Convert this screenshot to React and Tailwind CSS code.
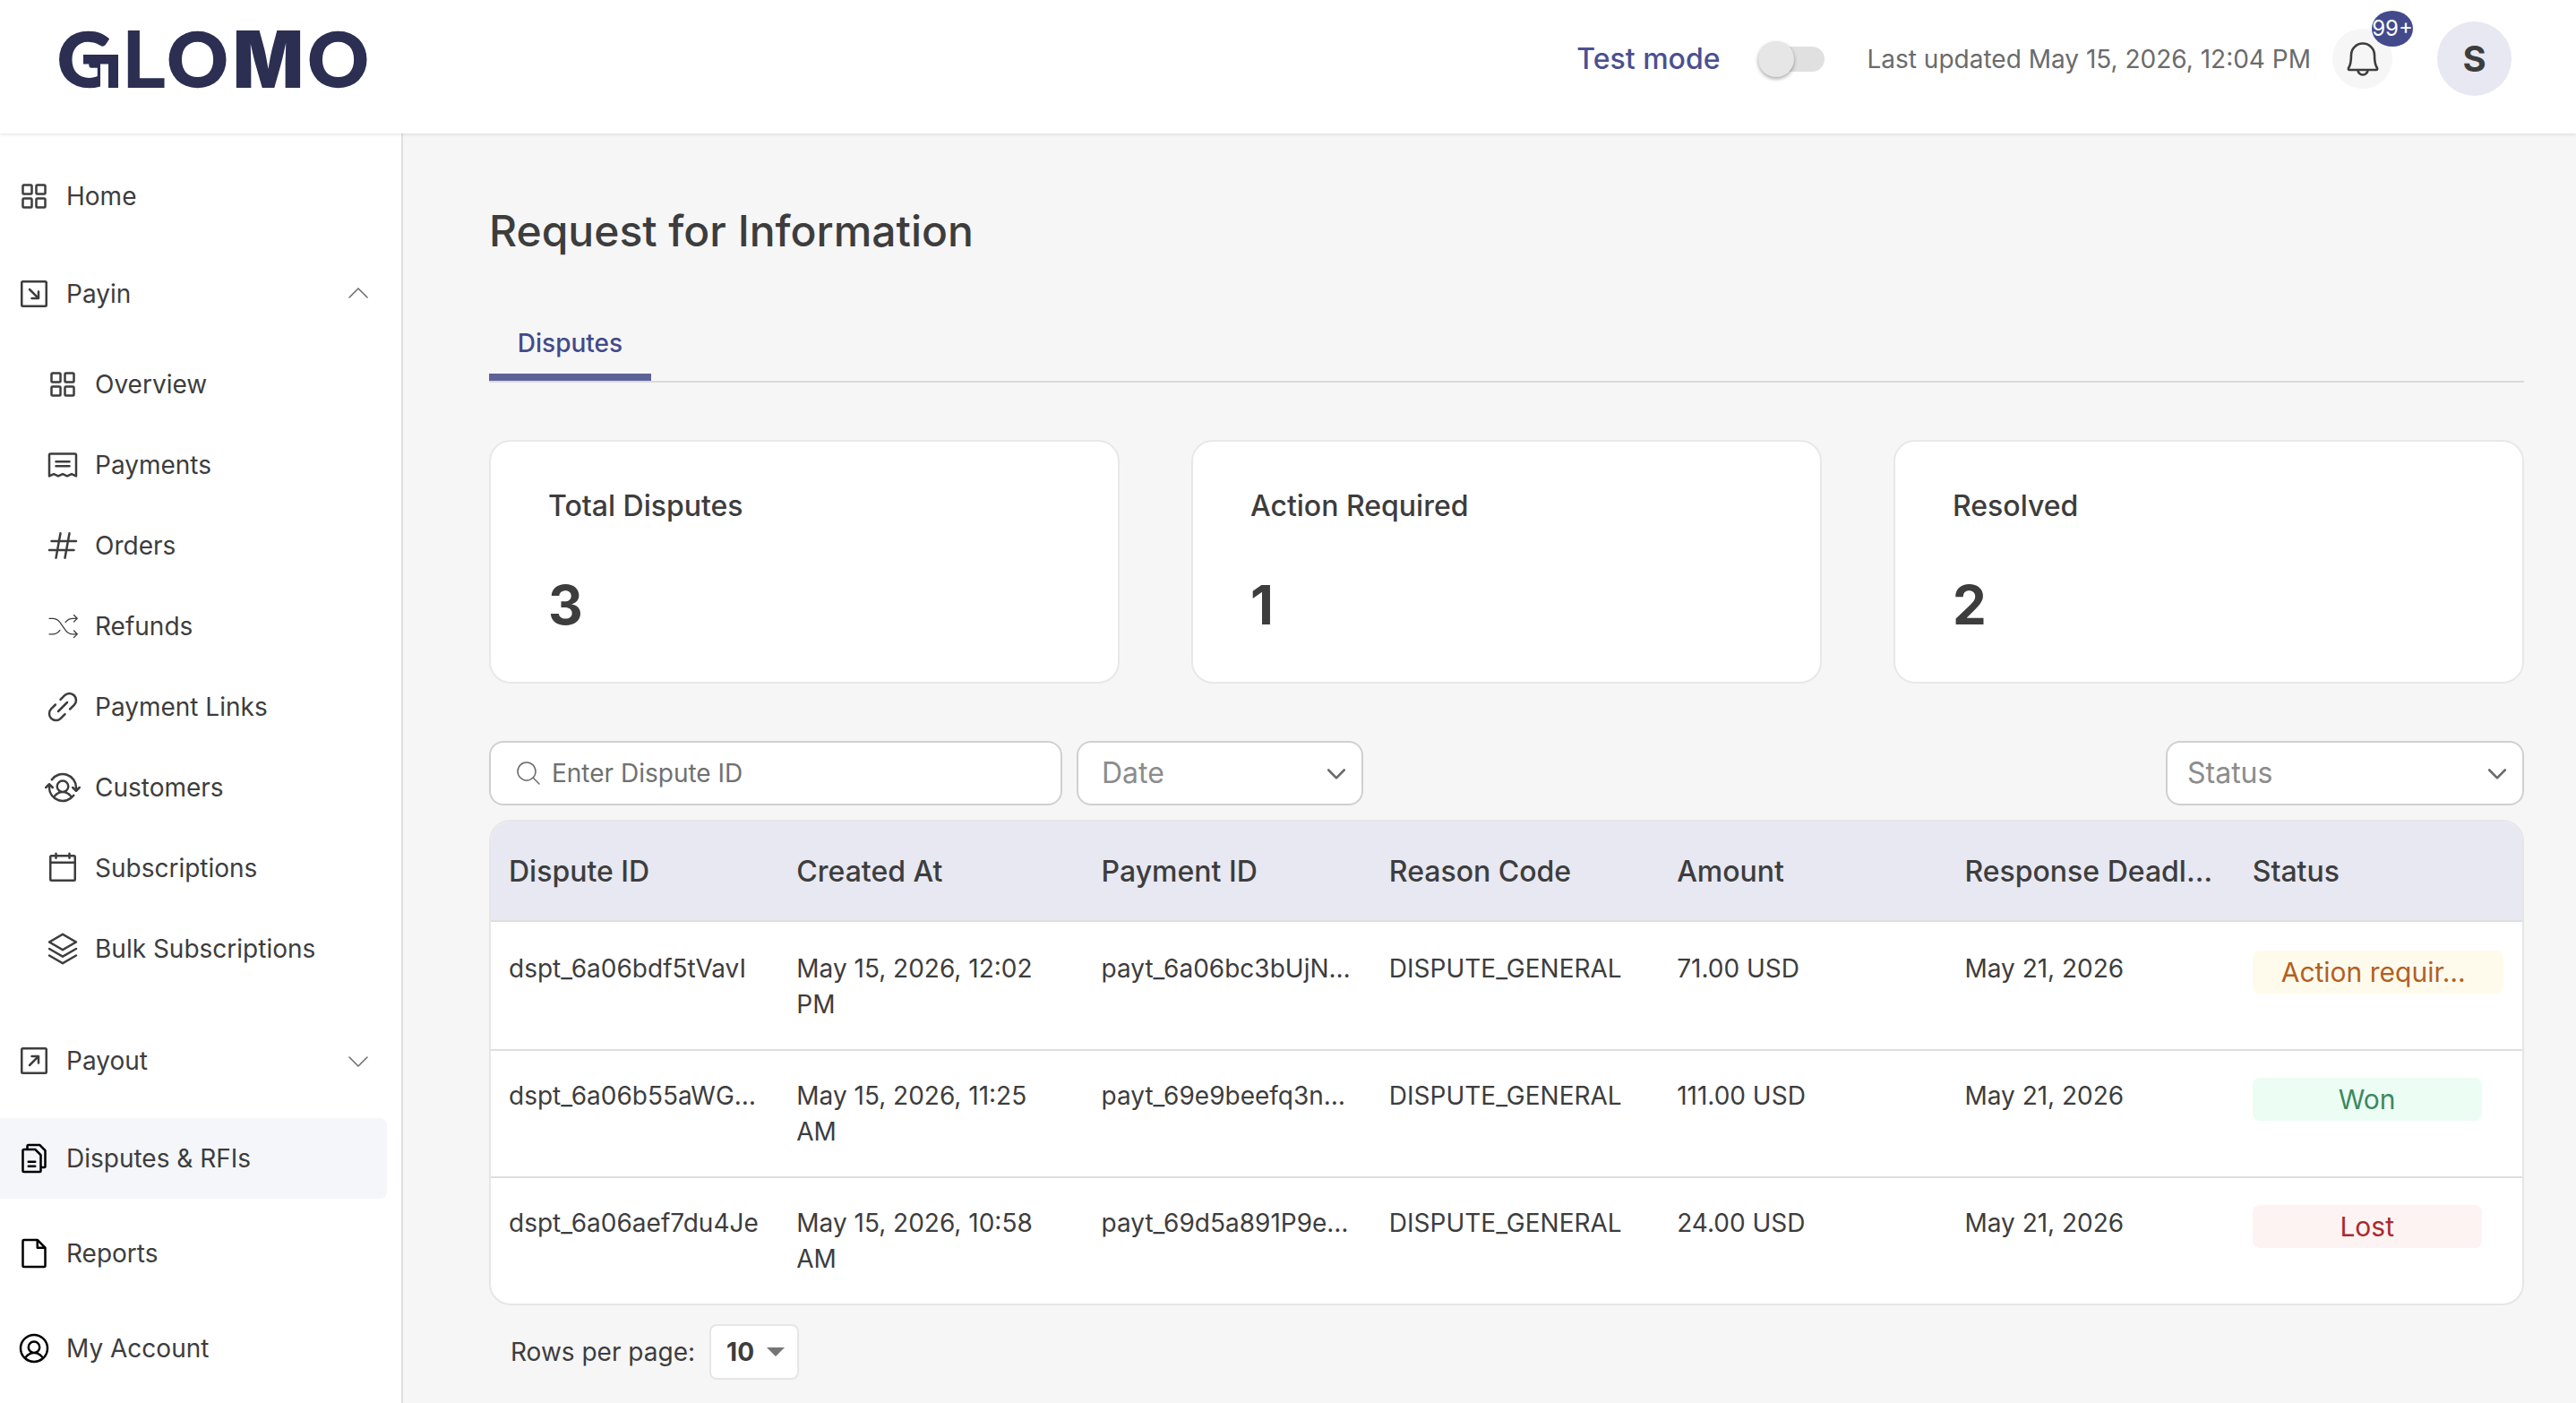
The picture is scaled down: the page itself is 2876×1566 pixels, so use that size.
import React from 'react';
import {
  PiSquaresFour,
  PiArrowSquareDownRight,
  PiArrowSquareUpRight,
  PiReceipt,
  PiHash,
  PiShuffleThin,
  PiLinkSimple,
  PiUserSwitch,
  PiCalendarBlank,
  PiStack,
  PiFiles,
  PiFile,
  PiUserCircle,
  PiCaretUpLight,
  PiCaretDownLight,
  PiCaretDownBold,
  PiMagnifyingGlassLight,
} from 'react-icons/pi';

const payinItems = [
  { label: 'Overview', icon: PiSquaresFour },
  { label: 'Payments', icon: PiReceipt },
  { label: 'Orders', icon: PiHash },
  { label: 'Refunds', icon: PiShuffleThin },
  { label: 'Payment Links', icon: PiLinkSimple },
  { label: 'Customers', icon: PiUserSwitch },
  { label: 'Subscriptions', icon: PiCalendarBlank },
  { label: 'Bulk Subscriptions', icon: PiStack },
];

const stats = [
  { label: 'Total Disputes', value: 3 },
  { label: 'Action Required', value: 1 },
  { label: 'Resolved', value: 2 },
];

const columns = ['Dispute ID', 'Created At', 'Payment ID', 'Reason Code', 'Amount', 'Response Deadl…', 'Status'];

const disputes = [
  {
    id: 'dspt_6a06bdf5tVavI',
    createdAt: 'May 15, 2026, 12:02 PM',
    paymentId: 'payt_6a06bc3bUjN…',
    reason: 'DISPUTE_GENERAL',
    amount: '71.00 USD',
    deadline: 'May 21, 2026',
    status: 'Action requir…',
    pill: 'w-[280px] pl-8 bg-[#fffbec] text-[#b35f1f]',
  },
  {
    id: 'dspt_6a06b55aWG…',
    createdAt: 'May 15, 2026, 11:25 AM',
    paymentId: 'payt_69e9beefq3n…',
    reason: 'DISPUTE_GENERAL',
    amount: '111.00 USD',
    deadline: 'May 21, 2026',
    status: 'Won',
    pill: 'w-64 justify-center bg-[#ecfdf4] text-[#3a8a5e]',
  },
  {
    id: 'dspt_6a06aef7du4Je',
    createdAt: 'May 15, 2026, 10:58 AM',
    paymentId: 'payt_69d5a891P9e…',
    reason: 'DISPUTE_GENERAL',
    amount: '24.00 USD',
    deadline: 'May 21, 2026',
    status: 'Lost',
    pill: 'w-64 justify-center bg-[#fdf3f3] text-[#a92b2b]',
  },
];

const Logo = () => (
  <svg className="h-[116px] w-[360px]" viewBox="0 0 360 116" role="img" aria-label="GLOMO">
    <g fill="#2c2f52" stroke="#2c2f52" strokeWidth="1.5" fontFamily="Lato" fontWeight="900" fontSize="84">
      <text x="2" y="88.5">G</text>
      <text x="75" y="90" stroke="none" fontFamily="Inter" fontWeight="700" fontSize="88">L</text>
      <text x="124.500" y="88.5">O</text>
      <text x="198" y="90" stroke="none" fontFamily="Inter" fontWeight="900" fontSize="88" textLength="79" lengthAdjust="spacingAndGlyphs">M</text>
      <text x="281.500" y="88.5">O</text>
    </g>
    {/* detached bracket of the G */}
    <rect x="50" y="62" width="22" height="30" fill="#fff" />
    <rect x="31" y="53" width="39" height="10.5" fill="#2c2f52" />
    <rect x="59" y="53" width="11" height="37" fill="#2c2f52" />
  </svg>
);

const BellIcon = () => (
  <svg className="size-10 text-[#3d3d3d]" viewBox="0 0 40 40" fill="none" stroke="currentColor" strokeWidth="2.6" strokeLinejoin="round">
    <path d="M7 15.5a13 13 0 0 1 26 0c0 7.500 1 11.500 3 14.500q.5 2-1 2H5q-1.500 0-1-2c2-3 3-7 3-14.500z" />
    <path d="M14.500 32a5.500 5.500 0 0 0 11 0" />
  </svg>
);

const Header = () => (
  <header className="relative z-10 flex h-[149px] shrink-0 justify-between bg-white pr-[72px] pl-[62px] shadow-[0_1px_4px_rgba(0,0,0,0.12)]">
    <div className="pt-2">
      <Logo />
    </div>
    <div className="mt-6 flex h-[83px] items-center">
      <span className="text-[32px] font-medium text-[#4a5091]">Test mode</span>
      <div className="mr-12 ml-[42px] flex h-10 w-[74px] items-center">
        <div className="flex h-7 w-full items-center rounded-full bg-[#e0e0e0]">
          <div className="size-10 rounded-full bg-[#e6e6e6] shadow-[0_2px_4px_rgba(0,0,0,0.35)]" />
        </div>
      </div>
      <span className="text-[28px] text-[#6b6b6b]">Last updated May 15, 2026, 12:04 PM</span>
      <div className="relative ml-6 flex size-[67px] items-center justify-center rounded-full bg-[#f6f6f6]">
        <BellIcon />
        <span className="absolute -top-5 left-11 flex h-10 w-[46px] items-center justify-center rounded-[50%] bg-[#434a8b] text-[24px] text-white">
          99+
        </span>
      </div>
      <div className="ml-[50px] flex size-[83px] items-center justify-center rounded-full bg-[#e7e8f1] text-[40px] font-bold text-[#3d3d3d]">
        S
      </div>
    </div>
  </header>
);

const Sidebar = () => (
  <nav className="flex w-[450px] shrink-0 flex-col border-r-2 border-[#e0e0e0] bg-white pt-[25px] text-[28px]">
    <div className="flex h-[90px] items-center gap-4 pl-[18px]">
      <PiSquaresFour className="size-10" />
      Home
    </div>
    <div className="mt-[19px] flex h-[90px] items-center gap-4 pr-8 pl-[18px]">
      <PiArrowSquareDownRight className="size-10" />
      <span className="flex-1">Payin</span>
      <PiCaretUpLight className="size-8 text-[#6b6b6b]" />
    </div>
    <div className="mt-[11px] pl-[50px]">
      {payinItems.map((item) => (
        <div key={item.label} className="flex h-[90px] items-center gap-4">
          <item.icon className="size-10" />
          {item.label}
        </div>
      ))}
    </div>
    <div className="mt-[35px] flex h-[90px] items-center gap-4 pr-8 pl-[18px]">
      <PiArrowSquareUpRight className="size-10" />
      <span className="flex-1">Payout</span>
      <PiCaretDownLight className="size-8 text-[#6b6b6b]" />
    </div>
    <div className="mt-[19px] mr-4 flex h-[90px] shrink-0 items-center gap-4 rounded-r-lg bg-[#f5f6fa] pl-[18px]">
      <PiFiles className="size-10 text-black" />
      Disputes &amp; RFIs
    </div>
    <div className="mt-4 flex h-[90px] items-center gap-4 pl-[18px]">
      <PiFile className="size-10 text-black" />
      Reports
    </div>
    <div className="mt-4 flex h-[90px] shrink-0 items-center gap-4 pl-[18px]">
      <PiUserCircle className="size-10 text-black" />
      My Account
    </div>
  </nav>
);

const StatCard = ({ label, value }) => (
  <div className="h-[272px] rounded-3xl border-2 border-[#e8e8e8] bg-white px-16 pt-12">
    <div className="text-[32px] leading-[48px] font-medium">{label}</div>
    <div className="mt-[50px] text-[60px] leading-[72px] font-bold">{value}</div>
  </div>
);

const Filters = () => (
  <div className="mt-16 flex h-[72px] gap-4">
    <div className="flex w-[640px] items-center gap-[10px] rounded-2xl border-2 border-[#d0d0d0] bg-white pl-[26px]">
      <PiMagnifyingGlassLight className="size-8 text-[#6b6b6b]" />
      <span className="text-[28px] text-[#707070]">Enter Dispute ID</span>
    </div>
    <div className="flex w-80 items-center justify-between rounded-2xl border-2 border-[#d0d0d0] bg-white pr-[14px] pl-[26px] text-[32px] text-[#8c8c8c]">
      Date
      <PiCaretDownBold className="size-7 text-[#6b6b6b]" />
    </div>
    <div className="ml-auto flex w-[400px] items-center justify-between rounded-2xl border-2 border-[#d0d0d0] bg-white pr-[14px] pl-[22px] text-[32px] text-[#8c8c8c]">
      Status
      <PiCaretDownBold className="size-7 text-[#6b6b6b]" />
    </div>
  </div>
);

const DisputeTable = () => (
  <div className="mt-4 overflow-hidden rounded-3xl border-2 border-[#e6e6e6] bg-white">
    <div className="grid h-28 grid-cols-[321fr_340fr_321fr_321fr_321fr_321fr_321fr] items-center border-b-2 border-[#dedede] bg-[#e7e8f1] pt-[2px] text-[32px] font-medium">
      {columns.map((col) => (
        <div key={col} className="pl-5 whitespace-nowrap">{col}</div>
      ))}
    </div>
    <div className="pt-[2px]">
      {disputes.map((row) => (
        <div
          key={row.id}
          className="grid grid-cols-[321fr_340fr_321fr_321fr_321fr_321fr_321fr] border-b-2 border-[#dedede] py-[30px] text-[28px] leading-10 last:border-b-0"
        >
          <div className="pl-5 whitespace-nowrap">{row.id}</div>
          <div className="pr-12 pl-5">{row.createdAt}</div>
          <div className="pl-5 whitespace-nowrap">{row.paymentId}</div>
          <div className="pl-5">{row.reason}</div>
          <div className="pl-5">{row.amount}</div>
          <div className="pl-5">{row.deadline}</div>
          <div className="pl-5">
            <div className={`flex h-12 items-center rounded-lg text-[30px] ${row.pill}`}>{row.status}</div>
          </div>
        </div>
      ))}
    </div>
  </div>
);

const App = () => {
  return (
    <div className="flex h-[1566px] w-[2876px] flex-col overflow-hidden bg-[#f6f6f6] font-[Inter,sans-serif] text-[#3d3d3d]">
      <Header />
      <div className="flex min-h-0 flex-1">
        <Sidebar />
        <main className="flex-1 pt-[73px] pr-[58px] pl-24">
          <h1 className="text-[48px] leading-[72px] font-medium">Request for Information</h1>
          <div className="mt-[45px] flex h-[88px] border-b-2 border-[#dadada]">
            <div className="flex w-[181px] justify-center border-b-8 border-[#5d6299] pt-6 text-[28px] leading-10 font-medium text-[#434a8b]">
              Disputes
            </div>
          </div>
          <div className="mt-16 grid grid-cols-3 gap-20">
            {stats.map((stat) => (
              <StatCard key={stat.label} label={stat.label} value={stat.value} />
            ))}
          </div>
          <Filters />
          <DisputeTable />
          <div className="mt-[21px] flex items-center gap-4 pl-6 text-[28px]">
            Rows per page:
            <div className="flex h-[62px] w-[100px] items-center rounded-lg border-2 border-[#e6e6e6] bg-white pl-[17px] font-bold">
              10
              <svg className="ml-[14px] h-[10px] w-5" viewBox="0 0 20 10" fill="#757575">
                <path d="M0 0h20L10 10z" />
              </svg>
            </div>
          </div>
        </main>
      </div>
    </div>
  );
};

export default App;
